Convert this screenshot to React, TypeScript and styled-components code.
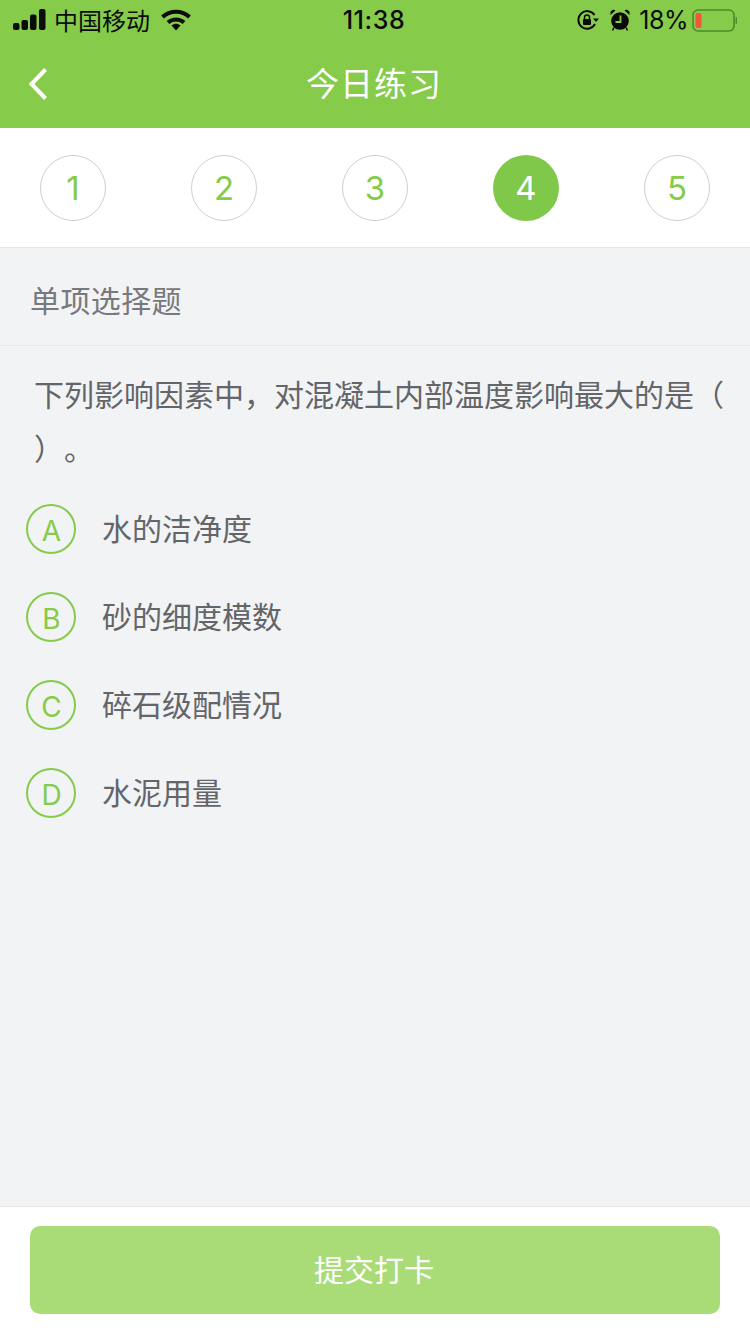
import React from "react";
import styled, { createGlobalStyle } from "styled-components";

const Global = createGlobalStyle`
  html, body { margin: 0; padding: 0; background: #f2f3f5; }
  * { box-sizing: border-box; }
  body { font-family: "Inter", "Liberation Sans", "Noto Sans CJK SC", sans-serif; }
`;
const cjk = `"Noto Sans CJK SC", "Liberation Sans", sans-serif`;
const Page = styled.div`
  width: 750px; height: 1334px; display: flex; flex-direction: column; background: #f2f3f5; overflow: hidden;
`;
const Header = styled.header`
  height: 128px; background: #86cb4a; display: flex; flex-direction: column; flex: none;
`;
const StatusBar = styled.div`
  height: 40px; display: grid; grid-template-columns: 1fr auto 1fr; align-items: center; padding: 0 13px; color: #0b0b0b;
`;
const StatusLeft = styled.div`
  display: flex; align-items: center;
`;
const Carrier = styled.span`
  font: 400 24px/40px ${cjk}; margin-left: 8px; margin-right: 11px;
`;
const Clock = styled.span`
  font: 500 25px/40px "Inter", sans-serif; letter-spacing: .6px; margin-left: -2px;
`;
const StatusRight = styled.div`
  display: flex; align-items: center; justify-content: flex-end;
`;
const Percent = styled.span`
  font: 400 25px/40px "Inter", sans-serif; margin: 0 4px 0 9px; letter-spacing: -.5px;
`;
const NavBar = styled.div`
  height: 88px; position: relative; display: flex; align-items: center; justify-content: center; padding: 0 2px 4px 0;
`;
const Back = styled.svg`
  position: absolute; left: 28px; top: 27px;
`;
const Title = styled.h1`
  margin: 0; color: #fff; font: 400 33px/46px ${cjk}; letter-spacing: 1px;
`;
const Steps = styled.nav`
  height: 120px; flex: none; background: #fff; border-bottom: 1px solid #e6e7e9; display: flex; justify-content: space-between; align-items: flex-start; padding: 27px 40px 0;
`;
const Step = styled.div<{ $active?: boolean }>`
  width: 66px; height: 66px; border-radius: 50%; display: flex; align-items: center; justify-content: center;
  font: 400 33px/1 "Inter", sans-serif;
  color: ${p => p.$active ? "#fff" : "#86cb4a"};
  background: ${p => p.$active ? "#7fc84a" : "#fff"};
  border: ${p => p.$active ? "none" : "1px solid #cfcfcf"};
`;
const SectionHead = styled.div`
  height: 98px; flex: none; border-bottom: 1px solid #e6e7e9; padding: 4px 30px 0; display: flex; align-items: center; color: #77797c; font: 400 30px/1 ${cjk}; letter-spacing: .4px;
`;
const Question = styled.p`
  margin: 0; padding: 20px 20px 0 34px; color: #636568; font: 400 30px/54px ${cjk}; height: 158px; line-break: anywhere; text-spacing-trim: space-all;
`;
const Options = styled.ul`
  list-style: none; margin: 0; padding: 0 0 0 26px; display: flex; flex-direction: column; gap: 38px; flex: 1;
`;
const Option = styled.li`
  display: flex; align-items: center; height: 50px;
`;
const Letter = styled.span`
  width: 50px; height: 50px; border-radius: 50%; border: 2px solid #86cb4a; color: #86cb4a; display: flex; align-items: center; justify-content: center; padding: 3px 0 0 1px; font: 400 28px/1 "Inter", sans-serif; flex: none;
`;
const OptionText = styled.span`
  margin-left: 26px; padding-bottom: 4px; color: #636568; font: 400 30px/1 ${cjk};
`;
const Footer = styled.footer`
  height: 128px; flex: none; background: #fff; border-top: 1px solid #e6e7e9; padding: 19px 30px 0;
`;
const Submit = styled.button`
  width: 690px; height: 88px; border: 0; border-radius: 10px; background: #a9dc77; color: #fff; font: 400 30px/1 ${cjk}; padding: 0 2px 4px 0;
`;

export default function App() {
  const options = [["A", "水的洁净度"], ["B", "砂的细度模数"], ["C", "碎石级配情况"], ["D", "水泥用量"]];
  return (
    <Page>
      <Global />
      <Header>
        <StatusBar>
          <StatusLeft>
            <svg width="33" height="22" viewBox="0 0 33 22" fill="#0b0b0b">
              <rect x="0" y="14" width="6.500" height="7" rx="2" />
              <rect x="8.500" y="11" width="6.500" height="10" rx="2" />
              <rect x="17" y="5.500" width="6.500" height="15.500" rx="2" />
              <rect x="26" y="0" width="6.500" height="21" rx="2" />
            </svg>
            <Carrier>中国移动</Carrier>
            <svg width="30" height="22" viewBox="0 0 30 22" fill="none" stroke="#0b0b0b" strokeWidth="4">
              <path d="M1.500 8C9 1 21 1 28.500 8" />
              <path d="M7 13.500C11.500 9.500 18.500 9.500 23 13.500" />
              <path d="M10.500 16.500L15 21.500L19.500 16.500C16.500 14.200 13.500 14.200 10.500 16.500Z" fill="#0b0b0b" stroke="none" />
            </svg>
          </StatusLeft>
          <Clock>11:38</Clock>
          <StatusRight>
            <svg width="22" height="20" viewBox="0 0 22 20" fill="none" stroke="#0b0b0b" strokeWidth="2">
              <path d="M17.500 5A8.800 8.800 0 1 0 18 14" />
              <path d="M16 8.500h6l-3 3.500z" fill="#0b0b0b" stroke="none" />
              <rect x="6" y="9" width="8" height="6" rx="1" fill="#0b0b0b" stroke="none" />
              <path d="M7.500 9V7.500a2.500 2.500 0 0 1 5 0V9" strokeWidth="1.500" />
            </svg>
            <svg style={{ marginLeft: 11 }} width="20" height="22" viewBox="0 0 20 22">
              <circle cx="10" cy="12" r="8.800" fill="#0b0b0b" />
              <path d="M.5 6L5.500 1.500 3 .6 .5 2.800zM19.500 6L14.500 1.500 17 .6 19.500 2.800z" fill="#0b0b0b" />
              <path d="M4 18.500L2.500 21.500M16 18.500l1.500 3" stroke="#0b0b0b" strokeWidth="1.500" />
              <path d="M10.500 6.500v6.500H5.500" stroke="#86cb4a" strokeWidth="1.800" fill="none" />
            </svg>
            <Percent>18%</Percent>
            <svg width="45" height="23" viewBox="0 0 45 23">
              <rect x="1" y="1" width="41" height="21" rx="5" fill="none" stroke="#4f8a2a" strokeWidth="1.600" />
              <rect x="3.500" y="4" width="6" height="15" rx="2" fill="#f1583a" />
              <rect x="43.500" y="8" width="1.500" height="7" rx=".7" fill="#4f8a2a" />
            </svg>
          </StatusRight>
        </StatusBar>
        <NavBar>
          <Back width="22" height="34" viewBox="0 0 22 34" fill="none" stroke="#fff" strokeWidth="4">
            <path d="M17.500 2.500L3.500 17l14 14.500" />
          </Back>
          <Title>今日练习</Title>
        </NavBar>
      </Header>
      <Steps>
        {[1, 2, 3, 4, 5].map(n => <Step key={n} $active={n === 4}>{n}</Step>)}
      </Steps>
      <SectionHead>单项选择题</SectionHead>
      <Question>下列影响因素中，对混凝土内部温度影响最大的是（）。</Question>
      <Options>
        {options.map(([l, t]) => (
          <Option key={l}><Letter>{l}</Letter><OptionText>{t}</OptionText></Option>
        ))}
      </Options>
      <Footer><Submit>提交打卡</Submit></Footer>
    </Page>
  );
}
